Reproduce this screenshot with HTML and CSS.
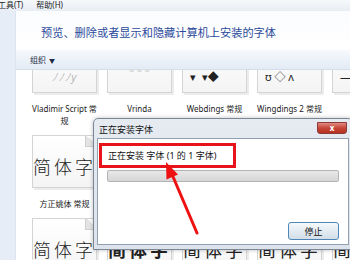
FILE: index.html
```html
<!DOCTYPE html>
<html lang="zh-CN">
<head>
    <meta charset="UTF-8">
    <title>字体</title>
    <link rel="stylesheet" href="styles.css">
</head>
<body>
    <!-- 菜单栏 -->
    <div class="menubar">
        <span>工具(T)</span>
        <span>帮助(H)</span>
    </div>

    <div class="window">
        <div class="sidebar"></div>
        <div class="main">
            <div class="header">
                <h1>预览、删除或者显示和隐藏计算机上安装的字体</h1>
            </div>
            <div class="toolbar">组织 <span class="caret">▼</span></div>

            <div class="content">
                <div class="grid">
                    <!-- 第一行 -->
                    <div class="item">
                        <div class="tile"><div class="frag frag-script">ﾉﾉﾉy</div></div>
                        <div class="label">Vladimir Script 常规</div>
                    </div>
                    <div class="item">
                        <div class="tile"><div class="frag frag-light">˜ ˜ ˜</div></div>
                        <div class="label">Vrinda</div>
                    </div>
                    <div class="item">
                        <div class="tile"><div class="frag frag-dark">▾&nbsp;&nbsp;▾◆</div></div>
                        <div class="label">Webdings 常规</div>
                    </div>
                    <div class="item">
                        <div class="tile"><div class="frag frag-dark">ʊ ◇ ʌ</div></div>
                        <div class="label">Wingdings 2 常规</div>
                    </div>
                    <div class="item">
                        <div class="tile"><div class="frag frag-dark">—</div></div>
                        <div class="label">Win</div>
                    </div>

                    <!-- 第二行（大部分被对话框挡住） -->
                    <div class="item">
                        <div class="tile page"><div class="sample thin">简体字</div></div>
                        <div class="label">方正姚体 常规</div>
                    </div>
                    <div class="item"><div class="tile page"></div></div>
                    <div class="item"><div class="tile page"></div></div>
                    <div class="item"><div class="tile page"></div></div>
                    <div class="item"><div class="tile page"></div></div>

                    <!-- 第三行 -->
                    <div class="item">
                        <div class="tile page"><div class="sample thin">简体字</div></div>
                    </div>
                    <div class="item">
                        <div class="tile page"><div class="sample bold">简体字</div></div>
                    </div>
                    <div class="item">
                        <div class="tile page"><div class="sample">简体字</div></div>
                    </div>
                    <div class="item">
                        <div class="tile page"><div class="sample">简体字</div></div>
                    </div>
                    <div class="item">
                        <div class="tile page"><div class="sample">简体字</div></div>
                    </div>
                </div>
            </div>
        </div>
    </div>

    <!-- 正在安装字体 对话框 -->
    <div class="dialog">
        <div class="titlebar">
            <span class="title">正在安装字体</span>
            <span class="close">x</span>
        </div>
        <div class="client">
            <div class="status">正在安装 字体 (1 的 1 字体)</div>
            <div class="progress"></div>
            <div class="actions">
                <button class="btn">停止</button>
            </div>
        </div>
    </div>

    <!-- 红色箭头标注 -->
    <svg class="arrow" width="350" height="260" viewBox="0 0 350 260">
        <line x1="197" y1="233" x2="171" y2="172" stroke="#ee1111" stroke-width="3" stroke-linecap="round"/>
        <polygon points="166,162 178,174.5 166.5,179.5" fill="#ee1111"/>
    </svg>
</body>
</html>
```

FILE: styles.css
```css
* {
    box-sizing: border-box;
}

body {
    margin: 0;
    width: 350px;
    height: 260px;
    overflow: hidden;
    position: relative;
    background: #ffffff;
    color: #1a1a1a;
    font-family: "Noto Sans", "Noto Sans CJK SC", sans-serif;
}

/* 菜单栏 */
.menubar {
    height: 11px;
    margin-left: -2px;
    display: flex;
    gap: 13px;
    background: linear-gradient(#f6f8fb, #e8edf4);
    font-size: 8px;
    line-height: 9px;
    color: #222;
}

.window {
    display: flex;
    height: 249px;
}

.sidebar {
    width: 16px;
    background: #e6edf7;
    border-right: 1px solid #dbe4ef;
}

.main {
    flex: 1;
    min-width: 0;
    display: flex;
    flex-direction: column;
}

.header {
    height: 39px;
    padding: 15px 0 0 25px;
    background: linear-gradient(#fbfcfe, #ffffff);
}

h1 {
    margin: 0;
    font-size: 11.2px;
    line-height: 14px;
    font-weight: normal;
    color: #2b4a9b;
    white-space: nowrap;
}

.toolbar {
    height: 20px;
    padding-left: 14px;
    background: linear-gradient(#f6f9fd, #e3ebf5);
    border-bottom: 1px solid #d3deea;
    font-size: 8px;
    line-height: 20px;
    color: #1e2d45;
}

.caret {
    font-size: 6px;
    margin-left: 1px;
}

/* 字体图标网格 */
.content {
    flex: 1;
    overflow: hidden;
}

.grid {
    display: grid;
    grid-template-columns: repeat(5, 65px);
    column-gap: 10px;
    row-gap: 8px;
    padding-left: 16px;
    margin-top: -30px;
}

.tile {
    position: relative;
    height: 53px;
    border: 1px solid #d4d4d4;
    background: linear-gradient(#ffffff, #f4f4f4);
    box-shadow: 2px 2px 0 #ececec;
    text-align: center;
    white-space: nowrap;
    overflow: hidden;
}

/* 右上角折页 */
.page::after {
    content: "";
    position: absolute;
    top: -1px;
    right: -1px;
    width: 11px;
    height: 11px;
    background: linear-gradient(225deg, #ffffff 50%, #e4e4e4 50%);
    border-left: 1px solid #cfcfcf;
    border-bottom: 1px solid #cfcfcf;
}

.frag {
    padding-top: 30px;
    font-size: 11px;
    line-height: 12px;
}

.frag-script {
    color: #b8b8b8;
    font-style: italic;
    letter-spacing: 1px;
}

.frag-light {
    color: #c8c8c8;
    padding-top: 28px;
}

.frag-dark {
    color: #222;
    text-align: left;
    padding-left: 7px;
}

.sample {
    padding-top: 21px;
    font-size: 18px;
    line-height: 20px;
    letter-spacing: 3px;
    color: #222;
}

.thin {
    font-weight: 300;
}

.bold {
    font-weight: 700;
}

.label {
    margin: 10px -3px 0;
    font-size: 8px;
    line-height: 12px;
    text-align: center;
    color: #1a1a1a;
}

/* 对话框 */
.dialog {
    position: absolute;
    left: 93px;
    top: 118px;
    width: 260px;
    height: 132px;
    display: flex;
    flex-direction: column;
    background: linear-gradient(#e6ebf2, #dce3ec);
    border: 1px solid #7b8797;
    border-radius: 5px 5px 0 0;
    box-shadow: 0 0 4px rgba(0, 0, 0, 0.25);
}

.titlebar {
    height: 19px;
    display: flex;
    justify-content: space-between;
    padding: 3px 5px 0 5px;
}

.title {
    font-size: 9px;
    line-height: 16px;
    color: #111;
}

.close {
    width: 30px;
    height: 12px;
    border: 1px solid #8a3a3a;
    border-radius: 0 0 3px 3px;
    background: linear-gradient(#e08a80, #c8463a 50%, #b5321f);
    color: #ffffff;
    font-size: 8px;
    font-weight: bold;
    line-height: 9px;
    text-align: center;
}

.client {
    flex: 1;
    margin: 0 3px 4px 3px;
    background: #ffffff;
    border: 1px solid #93a0b0;
}

.status {
    width: 137px;
    height: 25px;
    margin: 4px 0 0 1px;
    padding: 2px 0 0 6px;
    border: 3px solid #e8141c;
    font-size: 9px;
    line-height: 15px;
    color: #111;
    white-space: nowrap;
}

.progress {
    width: 232px;
    height: 12px;
    margin: 2px 0 0 9px;
    border: 1px solid #b4b4b4;
    border-radius: 2px;
    background: linear-gradient(#e8e8e8, #d6d6d6);
}

.actions {
    display: flex;
    justify-content: flex-end;
    padding: 40px 9px 0 0;
}

.btn {
    width: 51px;
    height: 18px;
    padding: 0;
    border: 1px solid #4f86b8;
    border-radius: 3px;
    background: linear-gradient(#f5f9fc, #e3ebf2 50%, #d3dee8);
    font-family: "Noto Sans CJK SC", sans-serif;
    font-size: 9px;
    color: #111;
}

/* 箭头标注 */
.arrow {
    position: absolute;
    left: 0;
    top: 0;
    pointer-events: none;
}
```
